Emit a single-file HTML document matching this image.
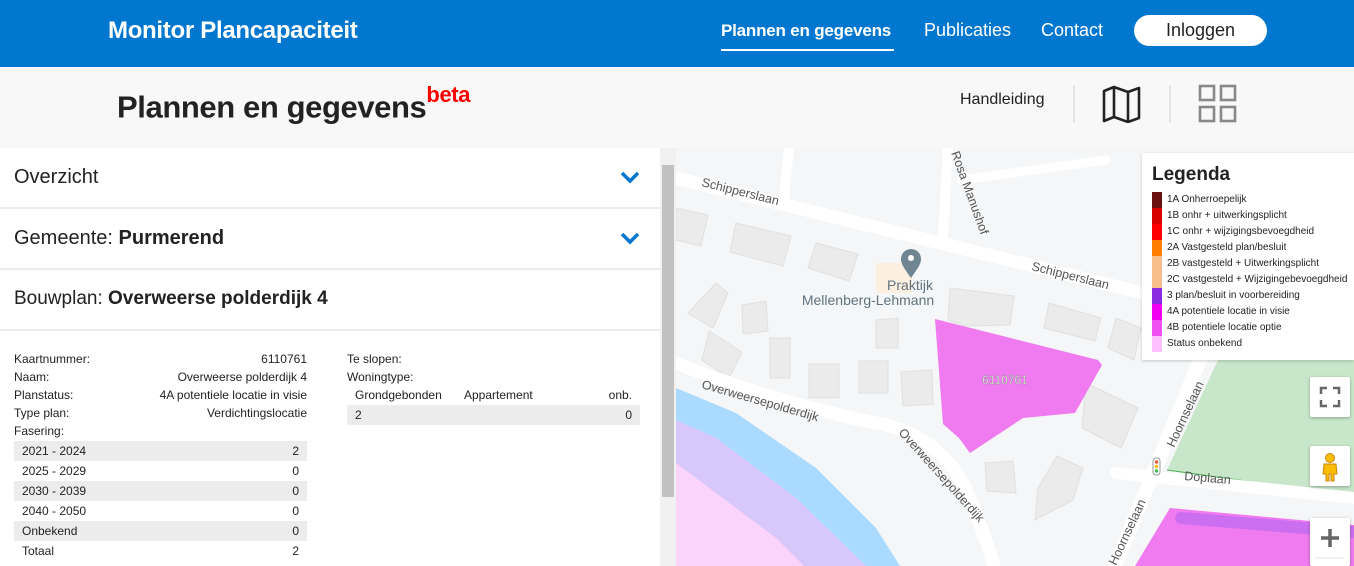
<!DOCTYPE html>
<html><head><meta charset="utf-8"><style>
*{margin:0;padding:0;box-sizing:border-box}
html,body{width:1354px;height:566px;overflow:hidden}
body{font-family:"Liberation Sans",Arial,sans-serif;background:#fff;position:relative;color:#222}
.hdr{position:absolute;left:0;top:0;width:1354px;height:67px;background:#0277cf;color:#fff}
.hdr .t{position:absolute;left:108px;top:17px;font-size:24px;font-weight:bold;letter-spacing:-0.3px}
.nav{position:absolute;top:20px;font-size:18px}
.btn{position:absolute;left:1134px;top:15px;width:133px;height:31px;border-radius:16px;background:#fff;color:#222;font-size:18px;text-align:center;line-height:31px}
.sub{position:absolute;left:0;top:67px;width:1354px;height:81px;background:#f8f8f8}
.sub h1{position:absolute;left:117px;top:19px;font-size:31px;font-weight:bold;color:#222;letter-spacing:-0.4px}
.sub h1 sup{color:#f00;font-size:22px;position:relative;top:-4px}
.sep{position:absolute;top:18px;width:2px;height:38px;background:#e6e6e6}
.left{position:absolute;left:0;top:148px;width:660px;height:418px;background:#fff}
.row{position:absolute;left:0;width:660px;height:61px;border-bottom:2px solid #ececec;font-size:20px;color:#222}
.row span{position:absolute;left:14px;top:18px}
.chev{position:absolute;left:620px;top:22px}
.scroll{position:absolute;left:660px;top:148px;width:16px;height:418px;background:#f1f1f1}
.thumb{position:absolute;left:662px;top:165px;width:12px;height:332px;background:#c1c1c1}
.d{position:absolute;font-size:12px;color:#222;height:18px;line-height:18px}
.tr{position:absolute;left:14px;width:293px;height:20px;line-height:20px;font-size:12px}
.tr.g{background:#ececec}
.tr b{font-weight:normal;position:absolute;left:8px}
.tr i{font-style:normal;position:absolute;right:8px}
.map{position:absolute;left:676px;top:148px}
.leg{position:absolute;left:1142px;top:153px;width:212px;height:207px;background:#fff;box-shadow:0 1px 3px rgba(0,0,0,.2)}
.leg h3{position:absolute;left:10px;top:11px;font-size:19px;font-weight:bold;color:#222}
.li{position:absolute;left:10px;height:16px;width:200px;font-size:10px;line-height:16px}
.li s{position:absolute;left:0;top:0;width:10px;height:16px}
.li span{position:absolute;left:15px}
.cb{position:absolute;left:1310px;width:40px;height:40px;background:#fff;border-radius:2px;box-shadow:0 1px 3px rgba(0,0,0,.3)}
</style></head><body>
<div class="hdr"><div class="t">Monitor Plancapaciteit</div>
<div class="nav" style="left:721px;font-weight:bold;font-size:17px;top:21px;letter-spacing:-0.2px">Plannen en gegevens</div>
<div style="position:absolute;left:721px;top:49px;width:173px;height:2px;background:#fff"></div>
<div class="nav" style="left:924px">Publicaties</div>
<div class="nav" style="left:1041px">Contact</div>
<div class="btn">Inloggen</div></div>
<div class="sub"><h1>Plannen en gegevens<sup>beta</sup></h1>
<div style="position:absolute;left:960px;top:24px;font-size:16px;color:#222">Handleiding</div>
<div class="sep" style="left:1073px"></div><div class="sep" style="left:1169px"></div>
<svg style="position:absolute;left:1102px;top:18px" width="40" height="38" viewBox="0 0 40 38"><path d="M2 6 L12 2 L26 7 L37 3 V33 L26 37 L12 32 L2 36 Z M12 2 V32 M26 7 V37" fill="none" stroke="#222" stroke-width="2.6" stroke-linejoin="round"/></svg>
<svg style="position:absolute;left:1198px;top:17px" width="40" height="40"><g fill="none" stroke="#888" stroke-width="2.6"><rect x="2" y="2" width="14" height="14"/><rect x="23" y="2" width="14" height="14"/><rect x="2" y="23" width="14" height="14"/><rect x="23" y="23" width="14" height="14"/></g></svg>
</div>
<div class="left">
<div class="row" style="top:0"><span>Overzicht</span><svg class="chev" width="20" height="16"><path d="M2 3 L10 11 L18 3" fill="none" stroke="#0277cf" stroke-width="3.5"/></svg></div>
<div class="row" style="top:61px"><span>Gemeente: <b>Purmerend</b></span><svg class="chev" width="20" height="16"><path d="M2 3 L10 11 L18 3" fill="none" stroke="#0277cf" stroke-width="3.5"/></svg></div>
<div class="row" style="top:122px"><span style="font-size:19px">Bouwplan: <b>Overweerse polderdijk 4</b></span></div>
</div>
<div class="d" style="left:14px;top:350px">Kaartnummer:</div><div class="d" style="left:14px;top:350px;width:293px;text-align:right">6110761</div>
<div class="d" style="left:14px;top:368px">Naam:</div><div class="d" style="left:14px;top:368px;width:293px;text-align:right">Overweerse polderdijk 4</div>
<div class="d" style="left:14px;top:386px">Planstatus:</div><div class="d" style="left:14px;top:386px;width:293px;text-align:right">4A potentiele locatie in visie</div>
<div class="d" style="left:14px;top:404px">Type plan:</div><div class="d" style="left:14px;top:404px;width:293px;text-align:right">Verdichtingslocatie</div>
<div class="d" style="left:14px;top:422px">Fasering:</div>
<div class="tr g" style="top:441px"><b>2021 - 2024</b><i>2</i></div>
<div class="tr" style="top:461px"><b>2025 - 2029</b><i>0</i></div>
<div class="tr g" style="top:481px"><b>2030 - 2039</b><i>0</i></div>
<div class="tr" style="top:501px"><b>2040 - 2050</b><i>0</i></div>
<div class="tr g" style="top:521px"><b>Onbekend</b><i>0</i></div>
<div class="tr" style="top:541px"><b>Totaal</b><i>2</i></div>
<div class="d" style="left:347px;top:350px">Te slopen:</div>
<div class="d" style="left:347px;top:368px">Woningtype:</div>
<div class="d" style="left:355px;top:386px">Grondgebonden</div><div class="d" style="left:464px;top:386px">Appartement</div><div class="d" style="left:347px;top:386px;width:285px;text-align:right">onb.</div>
<div style="position:absolute;left:347px;top:405px;width:293px;height:20px;background:#ececec;font-size:12px;line-height:20px"><span style="position:absolute;left:8px">2</span><span style="position:absolute;right:8px">0</span></div>
<div class="scroll"></div><div class="thumb"></div>
<svg class="map" width="678" height="418" viewBox="0 0 678 418">
<rect width="678" height="418" fill="#f5f6f7"/>
<polygon points="542,212 491,322 678,348 678,212" fill="#c8e6c9"/>
<line x1="491" y1="322" x2="678" y2="348" stroke="#4caf50" stroke-width="1"/>
<g fill="#ebebeb" stroke="#e0e0e0">
<polygon points="60,75 115,88 107,118 54,104"/><polygon points="140,95 182,106 173,133 132,120"/><polygon points="0,60 32,67 25,98 0,92"/>
<polygon points="40,135 52,145 37,180 12,165"/><polygon points="33,183 66,204 53,230 26,212"/><polygon points="94,190 114,190 114,230 94,230"/>
<polygon points="133,216 163,216 163,250 133,250"/><polygon points="183,213 212,213 212,245 183,245"/><polygon points="225,224 256,222 257,256 227,258"/>
<polygon points="274,140 338,148 334,177 289,178 272,172"/><polygon points="373,155 425,170 419,193 368,180"/><polygon points="410,235 462,260 445,300 406,280"/>
<polygon points="381,308 407,320 397,352 359,372 362,340"/><polygon points="309,315 337,313 340,345 311,343"/><polygon points="200,172 222,170 222,200 200,200"/>
<polygon points="66,157 90,153 92,183 67,186"/><polygon points="440,170 465,180 458,212 432,200"/>
</g>
<polygon points="0,240 60,265 140,320 200,380 224,418 190,418 120,350 40,290 0,272" fill="#aadaff"/>
<polygon points="0,272 40,290 120,350 190,418 0,418" fill="#d8c7fb"/>
<polygon points="0,315 40,345 100,390 128,418 0,418" fill="#fcd4fb"/>
<g fill="none" stroke="#fff" stroke-linecap="round">
<path d="M0 30 L678 197" stroke-width="13"/>
<path d="M113 0 L108 50" stroke-width="10"/><path d="M272 0 L267 88" stroke-width="10"/>
<path d="M285 32 L430 12" stroke-width="9"/>
<path d="M0 215 Q100 255 200 275 Q260 285 290 340 Q310 390 318 418" stroke-width="13"/>
<path d="M533 190 L439 418" stroke-width="14"/>
<path d="M440 325 L678 350" stroke-width="12"/>
</g>
<polygon points="494,360 678,377 678,418 459,418" fill="#f07af0"/>
<path d="M505 370 L678 384" stroke="#cc6ef0" stroke-width="12" stroke-linecap="round"/>
<polygon points="259,171 422,212 426,217 399,265 347,270 294,305 283,290 267,276" fill="#f07af0"/>
<text x="329" y="236" font-size="12" fill="#fff" stroke="#888" stroke-width=".4" text-anchor="middle" font-family="Liberation Sans">6110761</text>
<rect x="200" y="115" width="36" height="30" fill="#fdefe0"/>
<path d="M235 130 C228 120 225 116 225 111 A10 10 0 0 1 245 111 C245 116 242 120 235 130Z" fill="#6f8592"/><circle cx="235" cy="110" r="3" fill="#fff"/>
<g font-family="Liberation Sans" fill="#5f7380" font-size="14" text-anchor="middle"><text x="234" y="142">Praktijk</text><text x="192" y="157">Mellenberg-Lehmann</text></g>
<g font-family="Liberation Sans" fill="#555" font-size="12.5">
<text x="25" y="38" transform="rotate(14 25 38)">Schipperslaan</text>
<text x="355" y="122" transform="rotate(14 355 122)">Schipperslaan</text>
<text x="25" y="240" transform="rotate(16 25 240)">Overweersepolderdijk</text>
<text x="222" y="285" transform="rotate(48 222 285)">Overweersepolderdijk</text>
<text x="498" y="300" transform="rotate(-65 498 300)">Hoornselaan</text>
<text x="440" y="418" transform="rotate(-65 440 418)">Hoornselaan</text>
<text x="508" y="332" transform="rotate(5 508 332)">Doplaan</text>
<text x="275" y="5" transform="rotate(70 275 5)">Rosa Manushof</text>
</g>
<rect x="477" y="310" width="7" height="17" rx="3" fill="#fff" stroke="#999"/><circle cx="480.5" cy="314" r="1.7" fill="#e53"/><circle cx="480.5" cy="318.5" r="1.7" fill="#fb0"/><circle cx="480.5" cy="323" r="1.7" fill="#4b5"/>
</svg>
<div class="leg"><h3>Legenda</h3>
<div class="li" style="top:39px"><s style="background:#6b0f0f"></s><span>1A Onherroepelijk</span></div>
<div class="li" style="top:55px"><s style="background:#d90000"></s><span>1B onhr + uitwerkingsplicht</span></div>
<div class="li" style="top:71px"><s style="background:#ff0000"></s><span>1C onhr + wijzigingsbevoegdheid</span></div>
<div class="li" style="top:87px"><s style="background:#ff7f00"></s><span>2A Vastgesteld plan/besluit</span></div>
<div class="li" style="top:103px"><s style="background:#f5be8a"></s><span>2B vastgesteld + Uitwerkingsplicht</span></div>
<div class="li" style="top:119px"><s style="background:#f5be8a"></s><span>2C vastgesteld + Wijzigingebevoegdheid</span></div>
<div class="li" style="top:135px"><s style="background:#8a2be2"></s><span>3 plan/besluit in voorbereiding</span></div>
<div class="li" style="top:151px"><s style="background:#f000f0"></s><span>4A potentiele locatie in visie</span></div>
<div class="li" style="top:167px"><s style="background:#f050f0"></s><span>4B potentiele locatie optie</span></div>
<div class="li" style="top:183px"><s style="background:#ffc0ff"></s><span>Status onbekend</span></div>
</div>
<div class="cb" style="top:377px"><svg width="40" height="40"><path d="M11 17V11H17M23 11H29V17M29 23V29H23M17 29H11V23" fill="none" stroke="#666" stroke-width="2.5"/></svg></div>
<div class="cb" style="top:446px"><svg width="40" height="40"><circle cx="20" cy="12" r="4.5" fill="#fbbc05" stroke="#c8870a"/><path d="M14 18 H26 L27 28 H24 V35 H21 V28 H19 V35 H16 V28 H13 Z" fill="#fbbc05" stroke="#c8870a"/></svg></div>
<div class="cb" style="top:518px;height:48px"><svg width="40" height="48"><path d="M20 11 V29 M11 20 H29" stroke="#666" stroke-width="3.5"/><line x1="5" y1="40" x2="35" y2="40" stroke="#e6e6e6"/></svg></div>
</body></html>
